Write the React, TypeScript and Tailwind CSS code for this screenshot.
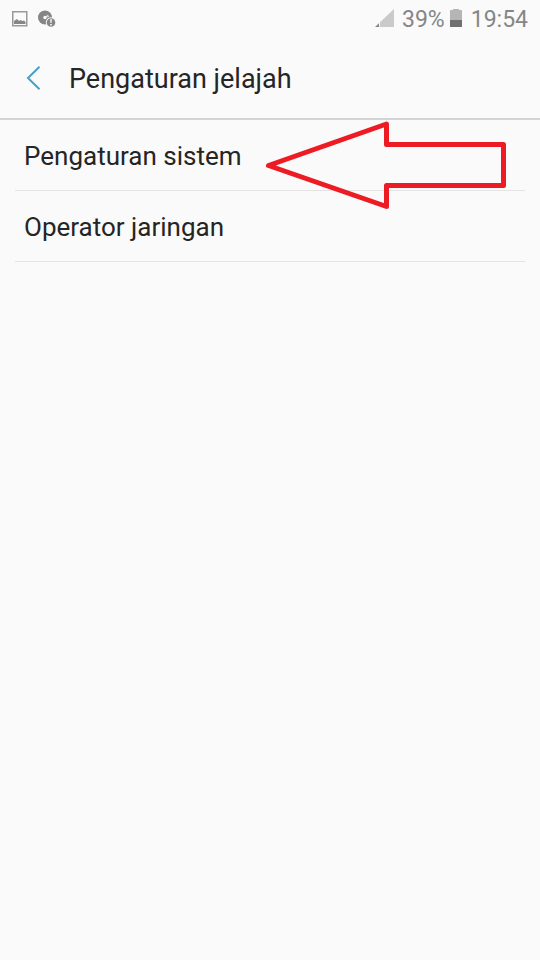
const items = ['Pengaturan sistem', 'Operator jaringan']

function StatusBar() {
  return (
    <div className="flex h-9 items-center justify-between px-3 text-[#868686]">
      <div className="flex items-center gap-[10px] pt-px">
        {/* Screenshot saved */}
        <svg width="16" height="16" viewBox="0 0 16 16" fill="none" aria-hidden="true">
          <rect x="0.75" y="0.75" width="14" height="14" stroke="#999" strokeWidth="1.5" />
          <path d="M2 13V10L3.5 9L5 8L7 10L8.5 9L10.5 10L12 9.5L13.5 11V13Z" fill="#868686" />
        </svg>
        {/* Disc with warning badge */}
        <svg width="18" height="18" viewBox="0 0 18 18" aria-hidden="true">
          <circle cx="7" cy="7.5" r="7" fill="#868686" />
          <path d="M7 7.5L9.5 4.5Q11 5.5 11.5 7Z" fill="#d5d5d5" />
          <circle cx="7" cy="7.5" r="1.7" fill="#fafafa" />
          <circle cx="13" cy="12.5" r="5.2" fill="#fafafa" />
          <circle cx="13" cy="12.5" r="4.3" fill="#868686" />
          <path d="M12.1 9.3H13.9L13.5 13H12.5ZM12.2 14H13.8V15.5H12.2Z" fill="#fafafa" />
        </svg>
      </div>
      <div className="flex items-center text-[23px] leading-9">
        <svg className="mr-2" width="19" height="18" viewBox="0 0 19 18" aria-hidden="true">
          <path d="M19 0V18H5V13.3Z" fill="#cacaca" />
          <path d="M4 14.2V18H0Z" fill="#868686" />
        </svg>
        <span className="pt-1">39%</span>
        <svg className="ml-[5px] mr-[9px]" width="12" height="18" viewBox="0 0 12 18" aria-hidden="true">
          <path d="M0 1H3V0H9V1H12V11H0Z" fill="#b5b5b5" />
          <path d="M0 11H12V18H0Z" fill="#707070" />
        </svg>
        <span className="pt-1">19:54</span>
      </div>
    </div>
  )
}

export default function App() {
  return (
    <div className="min-h-screen bg-[#fafafa] font-[Roboto,sans-serif] text-[#252525]">
      <StatusBar />

      <header className="flex h-[84px] items-center border-b-2 border-[#d3d3d3] pl-[26px] pt-0.5">
        <button type="button" aria-label="Kembali" className="mr-7">
          <svg width="15" height="24" viewBox="0 0 15 24" fill="none" aria-hidden="true">
            <path d="M13.5 0.8L2 12L13.5 23.2" stroke="#46a0c8" strokeWidth="2" />
          </svg>
        </button>
        <h1 className="pt-0.5 text-[27px] leading-9">Pengaturan jelajah</h1>
      </header>

      <main className="relative">
        <ul className="px-[15px]">
          {items.map((item) => (
            <li key={item} className="border-b border-[#e4e4e4]">
              <button type="button" className="h-[70px] w-full px-[9px] pt-0.5 text-left text-[26px]">
                {item}
              </button>
            </li>
          ))}
        </ul>

        {/* Arrow pointing at the first row */}
        <svg
          className="pointer-events-none absolute left-[264px] top-0"
          width="244"
          height="92"
          viewBox="0 0 244 92"
          fill="none"
          aria-hidden="true"
        >
          <path
            d="M4.5 45.5L122.5 4V24.5H239.5V65.5H122.5V86.5Z"
            stroke="#ed1c24"
            strokeWidth="5"
            strokeLinejoin="round"
          />
        </svg>
      </main>
    </div>
  )
}
